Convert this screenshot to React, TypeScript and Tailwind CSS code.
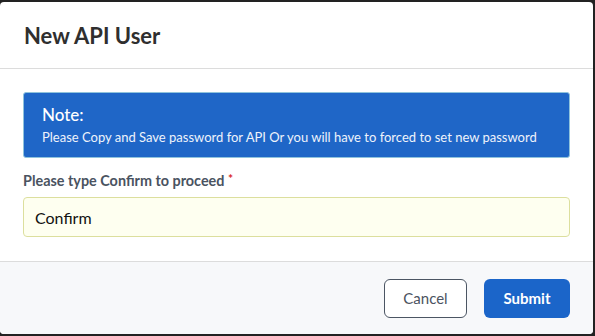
import React from "react";

export default function App() {
    return (
        <div className="w-[595px] h-[336px] bg-[#222222] pt-[2px] pr-[2px] pb-[2px] font-['Lato','Noto_Sans',sans-serif]">
            <div className="flex flex-col h-full bg-white rounded-[4px] overflow-hidden">
                <div className="flex items-center h-[67px] px-6 border-b border-[#dcdcdc]">
                    <h1 className="text-[22px] font-bold text-[#2f2f2f]">New API User</h1>
                </div>

                <div className="flex flex-col px-[23px] pt-[23px] pb-[24px] border-b border-[#dcdcdc]">
                    <div className="bg-[#1f66c7] border border-[#8fc3dc] rounded-[3px] px-[18px] py-[10px] text-white">
                        <p className="text-[17px] leading-6 font-medium">Note:</p>
                        <p className="text-[13px] leading-5 text-[#eef3fb]">Please Copy and Save password for API Or you will have to forced to set new password</p>
                    </div>

                    <label className="mt-[13px] text-[14.4px] leading-5 font-bold text-[#4a5361]">
                        Please type Confirm to proceed <span className="text-[#d9262b] align-top text-xs">*</span>
                    </label>

                    <input
                        className="mt-[6px] h-[40px] px-[11px] bg-[#fefff0] border border-[#dcdf9e] rounded-[4px] text-[16px] text-[#111] outline-none"
                        defaultValue="Confirm"
                    />
                </div>

                <div className="flex flex-1 items-center justify-end gap-[17px] pr-[23px] bg-[#f7f8fa]">
                    <button className="w-[83px] h-[39px] border border-[#4b5563] rounded-[6px] bg-white text-[15px] text-[#4b5361]">Cancel</button>
                    <button className="w-[86px] h-[39px] rounded-[6px] bg-[#1b65c9] text-[15px] font-bold text-white">Submit</button>
                </div>
            </div>
        </div>
    );
}
